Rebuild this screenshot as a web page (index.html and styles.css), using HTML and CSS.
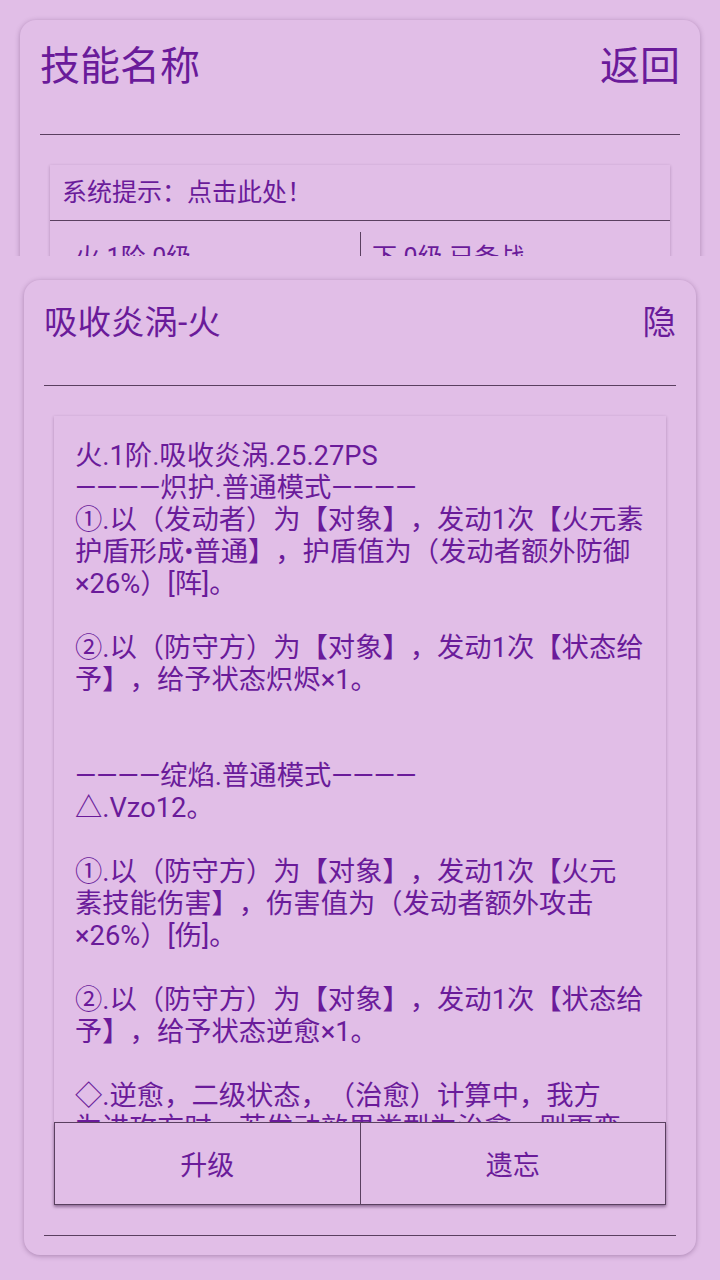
FILE: index.html
```html
<!DOCTYPE html>
<html lang="zh-CN">
<head>
<meta charset="utf-8">
<title>技能名称</title>
<link rel="stylesheet" href="styles.css">
</head>
<body>
<div class="page">
  <div class="top">
    <div class="card card-main">
      <div class="card-head">
        <span class="title">技能名称</span>
        <span class="action">返回</span>
      </div>
      <div class="rule"></div>
      <div class="panel">
        <div class="panel-head">系统提示：点击此处！</div>
        <div class="stats">
          <div class="stat">火.1阶.0级</div>
          <div class="stat stat-right">下.0级.已备战</div>
        </div>
      </div>
    </div>
  </div>

  <div class="card card-skill">
    <div class="skill-head">
      <span class="skill-title">吸收炎涡-火</span>
      <span class="skill-action">隐</span>
    </div>
    <div class="rule"></div>
    <div class="panel panel-skill">
      <div class="desc">火.1阶.吸收炎涡.25.27PS
————炽护.普通模式————
①.以（发动者）为【对象】，发动1次【火元素
护盾形成•普通】，护盾值为（发动者额外防御
×26%）[阵]。

②.以（防守方）为【对象】，发动1次【状态给
予】，给予状态炽烬×1。


————绽焰.普通模式————
△.Vzo12。

①.以（防守方）为【对象】，发动1次【火元
素技能伤害】，伤害值为（发动者额外攻击
×26%）[伤]。

②.以（防守方）为【对象】，发动1次【状态给
予】，给予状态逆愈×1。

◇.逆愈，二级状态，（治愈）计算中，我方
为进攻方时，若发动效果类型为治愈，则更变
为伤害。</div>
      <div class="buttons">
        <div class="btn">升级</div>
        <div class="btn">遗忘</div>
      </div>
    </div>
    <div class="rule rule-bottom"></div>
  </div>
</div>
</body>
</html>
```

FILE: styles.css
```css
html, body {
  margin: 0;
  padding: 0;
}

body {
  background: #e1bee7;
  color: #6a1b9a;
  font-family: Roboto, "Noto Sans CJK SC", sans-serif;
  text-spacing-trim: space-all;
}

.page {
  width: 720px;
  height: 1280px;
  overflow: hidden;
}

.top {
  height: 256px;
  overflow: hidden;
  padding: 20px 20px 0;
  box-sizing: border-box;
}

.card {
  background: #e1bee7;
  border-radius: 16px;
  box-shadow: 0 1px 5px rgba(70, 30, 80, 0.35);
}

.card-main {
  height: 320px;
  padding: 0 20px;
}

.card-head {
  display: flex;
  justify-content: space-between;
  align-items: flex-start;
  height: 114px;
  padding-top: 27px;
  box-sizing: border-box;
  font-size: 40px;
  line-height: 40px;
}

.rule {
  height: 1px;
  background: #5a4060;
}

.panel {
  margin: 30px 10px 0;
  background: #e1bee7;
  box-shadow: 0 1px 3px rgba(70, 30, 80, 0.3);
}

.panel-head {
  height: 55px;
  padding-left: 12px;
  font-size: 25px;
  line-height: 55px;
  border-bottom: 1px solid #5a4060;
}

.stats {
  display: flex;
  height: 100px;
}

.stat {
  flex: none;
  width: 50%;
  box-sizing: border-box;
  padding: 24px 0 0 25px;
  font-size: 25px;
  line-height: 25px;
}

.stat-right {
  margin-top: 11px;
  padding-top: 13px;
  padding-left: 11px;
  border-left: 1px solid #5a4060;
}

.card-skill {
  margin: 24px 24px 0;
  padding: 0 20px 19px;
}

.skill-head {
  display: flex;
  justify-content: space-between;
  align-items: flex-start;
  height: 105px;
  padding-top: 26px;
  box-sizing: border-box;
  font-size: 33.5px;
  line-height: 33px;
}

.panel-skill {
  margin-top: 30px;
}

.desc {
  height: 706px;
  overflow: hidden;
  box-sizing: border-box;
  padding: 24px 21px 0;
  font-size: 27.3px;
  line-height: 32px;
  white-space: pre;
}

.buttons {
  display: flex;
  height: 83px;
  box-shadow: 0 2px 3px rgba(60, 30, 70, 0.35);
}

.btn {
  flex: 1;
  display: flex;
  align-items: center;
  justify-content: center;
  border: 1px solid #5a4060;
  font-size: 27px;
  background: #e1bee7;
}

.btn + .btn {
  border-left: none;
}

.rule-bottom {
  margin-top: 30px;
}
```
